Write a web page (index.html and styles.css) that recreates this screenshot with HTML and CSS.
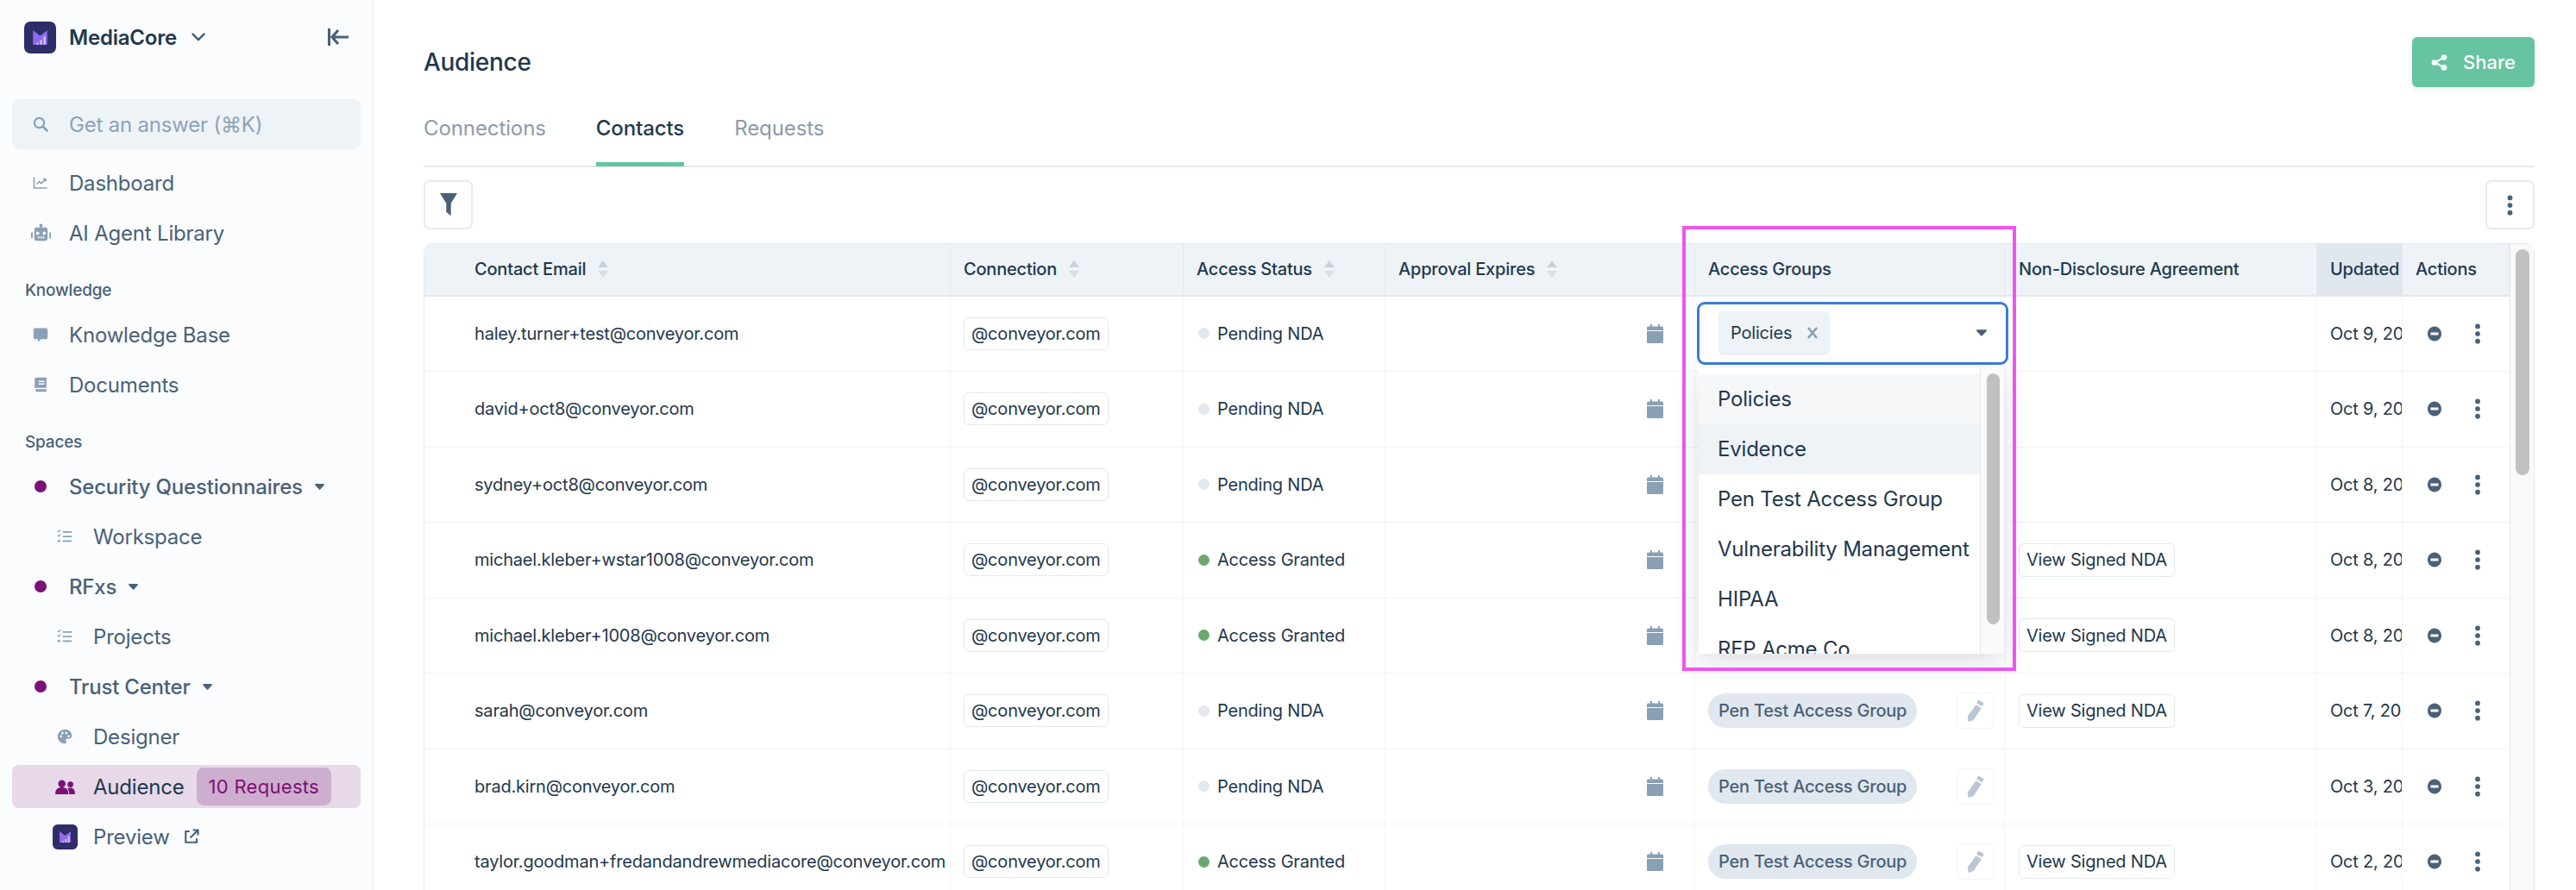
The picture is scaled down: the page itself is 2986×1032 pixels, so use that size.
FILE: index.html
```html
<!DOCTYPE html>
<html lang="en">
<head>
<meta charset="utf-8">
<title>Audience</title>
<link rel="stylesheet" href="styles.css">
</head>
<body>
<svg class="defs" aria-hidden="true">
  <symbol id="i-logo" viewBox="0 0 36 36"><rect width="36" height="36" rx="7" fill="#2f2d68"/><path d="M10 10l8 6 8-6v16H10z" fill="#8f6bf0"/><path d="M14 24h2v2h-2zM18 21h2v5h-2zM22 17h2v9h-2z" fill="#d9ccff"/></symbol>
  <symbol id="i-chart" viewBox="0 0 24 24"><path d="M2 3v17h20" fill="none" stroke="currentColor" stroke-width="2"/><path d="M6 14l4-4 3 3 6-6M16 6h4v4" fill="none" stroke="currentColor" stroke-width="2"/></symbol>
  <symbol id="i-robot" viewBox="0 0 24 24"><path d="M11 1h2v4h-2z"/><circle cx="12" cy="2.500" r="2"/><path fill-rule="evenodd" d="M7 5h10a3 3 0 0 1 3 3v10a3 3 0 0 1-3 3H7a3 3 0 0 1-3-3V8a3 3 0 0 1 3-3zm1 5a2 2 0 1 0 0 4 2 2 0 0 0 0-4zm8 0a2 2 0 1 0 0 4 2 2 0 0 0 0-4zM8 16v2h2v-2zm3 0v2h2v-2zm3 0v2h2v-2z"/><path d="M0 11h2v7H0zM22 11h2v7h-2z"/></symbol>
  <symbol id="i-msg" viewBox="0 0 24 24"><path d="M4 2h16a3 3 0 0 1 3 3v11a3 3 0 0 1-3 3h-7l-5 4v-4H4a3 3 0 0 1-3-3V5a3 3 0 0 1 3-3z"/></symbol>
  <symbol id="i-book" viewBox="0 0 24 24"><path fill-rule="evenodd" d="M6 1h15v16H6a3 3 0 0 0-3 1V4a3 3 0 0 1 3-3zm3 5v2h9V6zm0 4v2h9v-2zM6 19h15v4H6a2 2 0 0 1 0-4z"/></symbol>
  <symbol id="i-list" viewBox="0 0 24 24"><path d="M9 4h14v2.400H9zM9 11h14v2.400H9zM9 18h14v2.400H9z"/><path d="M1 3l2 2 3-3.500M1 10l2 2 3-3.500" fill="none" stroke="currentColor" stroke-width="1.500"/><circle cx="3" cy="19" r="2"/></symbol>
  <symbol id="i-palette" viewBox="0 0 24 24"><path fill-rule="evenodd" d="M12 1c6.500 0 11 4.500 11 9.500 0 3.500-2.500 5-5 5h-3c-1.500 0-2 1-1.500 2.300.6 1.600 1 2.200 1 3 0 1.300-1.200 2.200-2.500 2.200C6 23 1 18 1 12S6 1 12 1zM6.500 10a1.800 1.800 0 1 0 0 3.600 1.800 1.800 0 0 0 0-3.600zm2-5a1.800 1.800 0 1 0 0 3.600 1.800 1.800 0 0 0 0-3.600zm6 0a1.800 1.800 0 1 0 0 3.600 1.800 1.800 0 0 0 0-3.600zm3.500 5a1.800 1.800 0 1 0 0 3.600 1.800 1.800 0 0 0 0-3.600z"/></symbol>
  <symbol id="i-users" viewBox="0 0 24 18"><circle cx="8" cy="5" r="4.500"/><circle cx="18.500" cy="6" r="3.500"/><path d="M0 17c0-5 3-7.500 8-7.500s8 2.500 8 7.500v1H0zM17 18v-1c0-2.500-.8-4.500-2.300-6 1-.6 2.300-.9 3.800-.9 3.500 0 5.500 2.400 5.500 6.400V18z"/></symbol>
  <symbol id="i-ext" viewBox="0 0 24 24"><path d="M9 4H3v17h17v-6M14 2h8v8M22 2L10 14" fill="none" stroke="currentColor" stroke-width="2.800"/></symbol>
  <symbol id="i-search" viewBox="0 0 24 24"><circle cx="10" cy="10" r="7.500" fill="none" stroke="currentColor" stroke-width="3"/><path d="M15.500 15.500L22 22" stroke="currentColor" stroke-width="3.400" stroke-linecap="round"/></symbol>
  <symbol id="i-caret" viewBox="0 0 16 10"><path d="M1.500 0h13c1.200 0 1.800 1.300 1 2.200L9 9.200c-.5.600-1.500.6-2 0L.500 2.200C-.3 1.300.3 0 1.500 0z"/></symbol>
  <symbol id="i-filter" viewBox="0 0 24 32"><path d="M1 1h22L15 14v16l-6-5V14z"/></symbol>
  <symbol id="i-share" viewBox="0 0 24 24"><path d="M18 5L6 12l12 7" fill="none" stroke="currentColor" stroke-width="2.600"/><circle cx="19" cy="4.500" r="4.200"/><circle cx="5" cy="12" r="4.200"/><circle cx="19" cy="19.500" r="4.200"/></symbol>
  <symbol id="i-kebab" viewBox="0 0 8 32"><circle cx="4" cy="4.500" r="3.800"/><circle cx="4" cy="16" r="3.800"/><circle cx="4" cy="27.500" r="3.800"/></symbol>
  <symbol id="i-sort" viewBox="0 0 12 20"><path d="M6 0l6 8H0z" fill="#c7d2dc"/><path d="M0 12h12l-6 8z" fill="#d7dfe6"/></symbol>
  <symbol id="i-cal" viewBox="0 0 19 22"><path d="M4 0h2v4H4zM13 0h2v4h-2zM1.500 2.500h16A1.500 1.500 0 0 1 19 4v3H0V4a1.500 1.500 0 0 1 1.500-1.500zM0 8h19v12.500a1.500 1.500 0 0 1-1.500 1.500h-16A1.500 1.500 0 0 1 0 20.500z"/></symbol>
  <symbol id="i-minus" viewBox="0 0 16 18"><path fill-rule="evenodd" d="M8 .5c4.400 0 8 3.800 8 8.500s-3.600 8.500-8 8.500S0 13.700 0 9 3.600.5 8 .5zM3.500 7.500v3h9v-3z"/></symbol>
  <symbol id="i-pencil" viewBox="0 0 20 26"><path d="M14 .8l5 3c.5.300.6.900.3 1.400l-1.800 3-6.200-3.700 1.300-3.300C12.900.6 13.500.5 14 .8zM10.500 6.300l6.300 3.800L7.700 24 1.500 26 .7 19.500z"/></symbol>
  <symbol id="i-x" viewBox="0 0 14 16"><path d="M2 2l10 12M12 2L2 14" stroke="currentColor" stroke-width="3" stroke-linecap="round" fill="none"/></symbol>
  <symbol id="i-collapse" viewBox="0 0 24 20"><path d="M1.500 0v20" stroke="currentColor" stroke-width="3" /><path d="M12 2l-7 8 7 8M6 10h18" fill="none" stroke="currentColor" stroke-width="3.200"/></symbol>
  <symbol id="i-chev" viewBox="0 0 16 10"><path d="M1.500 1.500L8 8l6.500-6.500" fill="none" stroke="currentColor" stroke-width="2.400" stroke-linecap="round"/></symbol>
</svg>

<div class="app">
  <aside class="sidebar">
    <div class="brand">
      <svg class="brand-logo"><use href="#i-logo"/></svg>
      <span class="brand-name">MediaCore</span>
      <svg class="brand-chev"><use href="#i-chev"/></svg>
      <svg class="collapse"><use href="#i-collapse"/></svg>
    </div>
    <div class="search">
      <span class="nav-ico"><svg class="ico-18"><use href="#i-search"/></svg></span>
      <span>Get an answer (⌘K)</span>
    </div>
    <nav class="nav">
      <a class="item"><span class="nav-ico"><svg class="ico-18"><use href="#i-chart"/></svg></span>Dashboard</a>
      <a class="item"><span class="nav-ico"><svg class="ico-22"><use href="#i-robot"/></svg></span>AI Agent Library</a>
      <div class="label label-k">Knowledge</div>
      <a class="item"><span class="nav-ico"><svg class="ico-18"><use href="#i-msg"/></svg></span>Knowledge Base</a>
      <a class="item"><span class="nav-ico"><svg class="ico-18"><use href="#i-book"/></svg></span>Documents</a>
      <div class="label label-s">Spaces</div>
      <a class="item space"><span class="nav-ico"><i class="dot"></i></span>Security Questionnaires<svg class="caret"><use href="#i-caret"/></svg></a>
      <a class="item sub"><span class="nav-ico"><svg class="ico-18"><use href="#i-list"/></svg></span>Workspace</a>
      <a class="item space"><span class="nav-ico"><i class="dot"></i></span>RFxs<svg class="caret"><use href="#i-caret"/></svg></a>
      <a class="item sub"><span class="nav-ico"><svg class="ico-18"><use href="#i-list"/></svg></span>Projects</a>
      <a class="item space"><span class="nav-ico"><i class="dot"></i></span>Trust Center<svg class="caret"><use href="#i-caret"/></svg></a>
      <a class="item sub"><span class="nav-ico"><svg class="ico-18"><use href="#i-palette"/></svg></span>Designer</a>
      <a class="item sub active"><span class="nav-ico"><svg class="ico-users"><use href="#i-users"/></svg></span><span class="active-text">Audience</span><span class="badge">10 Requests</span></a>
      <a class="item sub"><span class="nav-ico"><svg class="ico-logo"><use href="#i-logo"/></svg></span>Preview<svg class="ext"><use href="#i-ext"/></svg></a>
    </nav>
  </aside>

  <main class="main">
    <header class="top">
      <h1>Audience</h1>
      <button class="share"><svg class="share-ico"><use href="#i-share"/></svg>Share</button>
    </header>
    <div class="tabs">
      <span class="tab">Connections</span>
      <span class="tab on">Contacts</span>
      <span class="tab">Requests</span>
    </div>
    <div class="toolbar">
      <button class="tool"><svg class="filter"><use href="#i-filter"/></svg></button>
      <button class="tool"><svg class="kebab-lg"><use href="#i-kebab"/></svg></button>
    </div>

    <div class="table">
      <div class="grid">
        <div class="row head">
          <div class="c first">Contact Email<svg class="sort"><use href="#i-sort"/></svg></div>
          <div class="c">Connection<svg class="sort"><use href="#i-sort"/></svg></div>
          <div class="c">Access Status<svg class="sort"><use href="#i-sort"/></svg></div>
          <div class="c">Approval Expires<svg class="sort"><use href="#i-sort"/></svg></div>
          <div class="c">Access Groups</div>
          <div class="c">Non-Disclosure Agreement</div>
          <div class="c upd">Updated</div>
          <div class="c">Actions</div>
        </div>

        <div class="row">
          <div class="c first">haley.turner+test@conveyor.com</div>
          <div class="c"><span class="tag">@conveyor.com</span></div>
          <div class="c"><i class="st"></i>Pending NDA</div>
          <div class="c cal"><svg class="cal-ico"><use href="#i-cal"/></svg></div>
          <div class="c groups">
            <div class="select">
              <span class="sel-chip">Policies<svg class="x"><use href="#i-x"/></svg></span>
              <svg class="sel-caret"><use href="#i-caret"/></svg>
              <div class="menu">
                <div class="opts">
                  <div class="opt sel">Policies</div>
                  <div class="opt hov">Evidence</div>
                  <div class="opt">Pen Test Access Group</div>
                  <div class="opt">Vulnerability Management</div>
                  <div class="opt">HIPAA</div>
                  <div class="opt">RFP Acme Co</div>
                </div>
                <div class="menu-track"><div class="menu-thumb"></div></div>
              </div>
            </div>
          </div>
          <div class="c"></div>
          <div class="c date">Oct 9, 2025</div>
          <div class="c acts"><svg class="minus"><use href="#i-minus"/></svg><svg class="kebab"><use href="#i-kebab"/></svg></div>
        </div>

        <div class="row">
          <div class="c first">david+oct8@conveyor.com</div>
          <div class="c"><span class="tag">@conveyor.com</span></div>
          <div class="c"><i class="st"></i>Pending NDA</div>
          <div class="c cal"><svg class="cal-ico"><use href="#i-cal"/></svg></div>
          <div class="c"></div>
          <div class="c"></div>
          <div class="c date">Oct 9, 2025</div>
          <div class="c acts"><svg class="minus"><use href="#i-minus"/></svg><svg class="kebab"><use href="#i-kebab"/></svg></div>
        </div>

        <div class="row">
          <div class="c first">sydney+oct8@conveyor.com</div>
          <div class="c"><span class="tag">@conveyor.com</span></div>
          <div class="c"><i class="st"></i>Pending NDA</div>
          <div class="c cal"><svg class="cal-ico"><use href="#i-cal"/></svg></div>
          <div class="c"></div>
          <div class="c"></div>
          <div class="c date">Oct 8, 2025</div>
          <div class="c acts"><svg class="minus"><use href="#i-minus"/></svg><svg class="kebab"><use href="#i-kebab"/></svg></div>
        </div>

        <div class="row">
          <div class="c first">michael.kleber+wstar1008@conveyor.com</div>
          <div class="c"><span class="tag">@conveyor.com</span></div>
          <div class="c"><i class="st ok"></i>Access Granted</div>
          <div class="c cal"><svg class="cal-ico"><use href="#i-cal"/></svg></div>
          <div class="c"></div>
          <div class="c"><span class="tag nda">View Signed NDA</span></div>
          <div class="c date">Oct 8, 2025</div>
          <div class="c acts"><svg class="minus"><use href="#i-minus"/></svg><svg class="kebab"><use href="#i-kebab"/></svg></div>
        </div>

        <div class="row">
          <div class="c first">michael.kleber+1008@conveyor.com</div>
          <div class="c"><span class="tag">@conveyor.com</span></div>
          <div class="c"><i class="st ok"></i>Access Granted</div>
          <div class="c cal"><svg class="cal-ico"><use href="#i-cal"/></svg></div>
          <div class="c"></div>
          <div class="c"><span class="tag nda">View Signed NDA</span></div>
          <div class="c date">Oct 8, 2025</div>
          <div class="c acts"><svg class="minus"><use href="#i-minus"/></svg><svg class="kebab"><use href="#i-kebab"/></svg></div>
        </div>

        <div class="row">
          <div class="c first">sarah@conveyor.com</div>
          <div class="c"><span class="tag">@conveyor.com</span></div>
          <div class="c"><i class="st"></i>Pending NDA</div>
          <div class="c cal"><svg class="cal-ico"><use href="#i-cal"/></svg></div>
          <div class="c pill-cell"><span class="pill">Pen Test Access Group</span><span class="edit"><svg class="pencil"><use href="#i-pencil"/></svg></span></div>
          <div class="c"><span class="tag nda">View Signed NDA</span></div>
          <div class="c date">Oct 7, 2025</div>
          <div class="c acts"><svg class="minus"><use href="#i-minus"/></svg><svg class="kebab"><use href="#i-kebab"/></svg></div>
        </div>

        <div class="row">
          <div class="c first">brad.kirn@conveyor.com</div>
          <div class="c"><span class="tag">@conveyor.com</span></div>
          <div class="c"><i class="st"></i>Pending NDA</div>
          <div class="c cal"><svg class="cal-ico"><use href="#i-cal"/></svg></div>
          <div class="c pill-cell"><span class="pill">Pen Test Access Group</span><span class="edit"><svg class="pencil"><use href="#i-pencil"/></svg></span></div>
          <div class="c"></div>
          <div class="c date">Oct 3, 2025</div>
          <div class="c acts"><svg class="minus"><use href="#i-minus"/></svg><svg class="kebab"><use href="#i-kebab"/></svg></div>
        </div>

        <div class="row">
          <div class="c first">taylor.goodman+fredandandrewmediacore@conveyor.com</div>
          <div class="c"><span class="tag">@conveyor.com</span></div>
          <div class="c"><i class="st ok"></i>Access Granted</div>
          <div class="c cal"><svg class="cal-ico"><use href="#i-cal"/></svg></div>
          <div class="c pill-cell"><span class="pill">Pen Test Access Group</span><span class="edit"><svg class="pencil"><use href="#i-pencil"/></svg></span></div>
          <div class="c"><span class="tag nda">View Signed NDA</span></div>
          <div class="c date">Oct 2, 2025</div>
          <div class="c acts"><svg class="minus"><use href="#i-minus"/></svg><svg class="kebab"><use href="#i-kebab"/></svg></div>
        </div>
      </div>
      <div class="vscroll"><div class="vthumb"></div></div>
    </div>
    <div class="highlight"></div>
  </main>
</div>
</body>
</html>
```

FILE: styles.css
```css
* { box-sizing: border-box; }
html, body { margin: 0; height: 100%; overflow: hidden; background: #fff; }
body {
  font-family: Inter, "Liberation Sans", sans-serif;
  color: #22384d;
  font-size: 20px;
  letter-spacing: -0.2px;
}
.defs { position: absolute; width: 0; height: 0; }
.app { display: flex; height: 1032px; }

/* sidebar */
.sidebar {
  width: 433px;
  flex: none;
  background: #fafcfe;
  border-right: 1px solid #e3e9ef;
  padding: 24px 14px 0;
  font-size: 24px;
  color: #4a6177;
}
.brand { display: flex; align-items: center; height: 38px; padding-left: 14px; }
.brand-logo { width: 37px; height: 37px; }
.brand-name { margin-left: 15px; font-weight: 600; color: #22384d; }
.brand-chev { width: 16px; height: 10px; margin-left: 17px; color: #3d566d; }
.collapse { width: 24px; height: 20px; margin-left: auto; margin-right: 14px; color: #4a6177; }
.search {
  display: flex; align-items: center;
  height: 58px; margin-top: 53px;
  background: #eef3f7; border-radius: 8px;
  color: #8ea3b5;
}
.nav-ico { width: 66px; flex: none; display: flex; justify-content: center; align-items: center; color: #8aa0b4; padding-right: 0; }
.nav { display: flex; flex-direction: column; padding-top: 14px; }
.item { display: flex; align-items: center; height: 50px; margin-bottom: 8px; border-radius: 8px; }
.ico-18 { width: 18px; height: 18px; fill: currentColor; }
.ico-22 { width: 23px; height: 23px; fill: currentColor; }
.label { font-size: 19px; font-weight: 500; padding-left: 15px; line-height: 24px; }
.label-k { margin-top: 22px; margin-bottom: 14px; }
.label-s { margin-top: 22px; margin-bottom: 14px; }
.dot { width: 14px; height: 14px; border-radius: 50%; background: #7b1075; }
.space { font-weight: 500; }
.caret { width: 11px; height: 7px; margin-left: 14px; fill: #4a6177; }
.sub .nav-ico { width: 94px; padding-left: 28px; margin-right: 0; justify-content: center; }
.active { background: #e8d9e8; color: #22384d; position: relative; }
.active .nav-ico { color: #7b1075; }
.ico-users { width: 23px; height: 17px; fill: currentColor; }
.badge {
  margin-left: 14px; height: 44px; padding: 0 14px;
  display: flex; align-items: center;
  background: #cdaece; color: #7b1075; border-radius: 8px;
  font-size: 22px; letter-spacing: 0.3px;
}
.ico-logo { width: 29px; height: 29px; }
.ext { width: 18px; height: 18px; margin-left: 16px; color: #4a6177; }

/* main */
.main { position: relative; flex: 1; min-width: 0; padding: 43px 48px 0 58px; }
.top { display: flex; justify-content: space-between; align-items: center; height: 58px; }
h1 { margin: 0; font-size: 28px; font-weight: 500; letter-spacing: -0.3px; color: #22384d; }
.share {
  display: flex; align-items: center; justify-content: center; gap: 18px;
  width: 142px; height: 58px; padding: 0;
  background: #66c4a0; color: #fff; border: 0; border-radius: 6px;
  font: 500 22px Inter, "Liberation Sans", sans-serif;
  box-shadow: 0 2px 6px rgba(60, 80, 100, .12);
}
.share-ico { width: 19px; height: 19px; fill: currentColor; }
.tabs { display: flex; gap: 58px; height: 69px; margin-top: 24px; border-bottom: 2px solid #e6ebf0; font-size: 24px; letter-spacing: -0.1px; }
.tab { color: #8c9bab; padding-top: 9px; margin-bottom: -1px; }
.tab.on { color: #22384d; font-weight: 500; border-bottom: 5px solid #66c4a0; }
.toolbar { display: flex; justify-content: space-between; margin-top: 15px; }
.tool {
  width: 57px; height: 57px; padding: 0;
  display: flex; align-items: center; justify-content: center;
  background: #fff; border: 2px solid #e6ebf0; border-radius: 7px;
}
.filter { width: 22px; height: 29px; fill: #4a6177; }
.kebab-lg { width: 7px; height: 24px; fill: #4a6177; }

/* table */
.table { display: flex; margin-top: 16px; border: 1px solid #e3e9ef; border-bottom: 0; border-radius: 10px 10px 0 0; width: 2447px; }
.grid { width: 2417px; flex: none; }
.row {
  display: grid;
  grid-template-columns: 610px 270px 234px 359px 360px 360px 100px 124px;
  height: 87.5px;
  border-bottom: 1px solid #f1f4f7;
}
.row.head { height: 60.5px; background: #eef3f7; border-bottom: 2px solid #e3e9ef; font-weight: 500; border-radius: 10px 0 0 0; }
.c { display: flex; align-items: center; padding-left: 15px; border-right: 1px solid #f3f5f8; white-space: nowrap; min-width: 0; }
.head .c { border-right: 1px solid #e3e9ef; }
.head .c:nth-child(6), .head .c:nth-child(7) { border-right: 0; }
.c.first { padding-left: 58px; }
.head .upd { background: #e0e7ee; padding-left: 16px; overflow: hidden; }
.sort { width: 12px; height: 20px; margin-left: 14px; }
.tag {
  display: inline-flex; align-items: center; height: 38px; padding: 0 8px;
  background: #fff; border: 1px solid #e3e9ef; border-radius: 6px;
}
.nda { height: 39px; }
.st { width: 13px; height: 13px; border-radius: 50%; background: #e2e8ee; margin: 0 9px 0 2px; flex: none; }
.st.ok { background: #6aa86e; }
.cal { justify-content: flex-end; padding-right: 36px; }
.cal-ico { width: 19px; height: 22px; fill: #8aa0b4; }
.date { overflow: hidden; padding-left: 16px; }
.acts { padding-left: 0; border-right: 0; }
.minus { width: 16px; height: 18px; margin-left: 29px; fill: #4a6177; }
.kebab { width: 6px; height: 24px; margin-left: 39px; fill: #4a6177; }

/* open multi-select */
.groups { padding-left: 2px; overflow: visible; position: relative; }
.select {
  position: relative; z-index: 3;
  flex: none; display: flex; align-items: center;
  width: 361px; height: 73px; margin-top: -1px;
  border: 3px solid #3b7cd8; border-radius: 9px;
  background: #fff; padding-left: 22px;
}
.sel-chip {
  display: flex; align-items: center; height: 51px; padding: 0 14px;
  background: #eef3f7; border-radius: 6px;
}
.x { width: 12px; height: 14px; margin-left: 18px; color: #8aa0b4; }
.sel-caret { width: 12px; height: 8px; margin-left: auto; margin-right: 22px; fill: #4a6177; }
.menu {
  position: absolute; left: -1px; top: 74px;
  width: 354px; height: 331px;
  display: flex; overflow: hidden;
  background: #fff; border-radius: 2px;
  box-shadow: 0 10px 32px rgba(40, 60, 85, .16);
  font-size: 24px;
}
.opts { flex: 1; padding-top: 7px; min-width: 0; overflow: hidden; }
.opt { height: 58px; padding-left: 22px; display: flex; align-items: center; }
.opt.sel { background: #f6f7f9; }
.opt.hov { background: #eef3f7; }
.menu-track { width: 28px; flex: none; background: #fafafa; border-left: 1px solid #e8e8e8; padding: 6px 0 0 7px; }
.menu-thumb { width: 15px; height: 291px; border-radius: 8px; background: #c1c1c1; }
.pill-cell { justify-content: space-between; padding-right: 13px; }
.pill {
  display: inline-flex; align-items: center; height: 40px; padding: 0 12px;
  background: #e0e7ee; color: #4a6177; border-radius: 20px; font-weight: 500;
}
.edit {
  display: flex; align-items: center; justify-content: center;
  width: 43px; height: 42px; border: 1px solid #f3f5f8; border-radius: 5px;
}
.pencil { width: 20px; height: 26px; fill: #b9c7d4; }
.vscroll { flex: 1; background: #f9f9f9; border-left: 1px solid #e9e9e9; padding: 6px 0 0 6px; }
.vthumb { width: 16px; height: 262px; border-radius: 8px; background: #c1c1c1; }

/* annotation */
.highlight {
  position: absolute; left: 1517px; top: 262px;
  width: 387px; height: 516px;
  border: 4px solid #ee55f0; z-index: 5; pointer-events: none;
}
```
